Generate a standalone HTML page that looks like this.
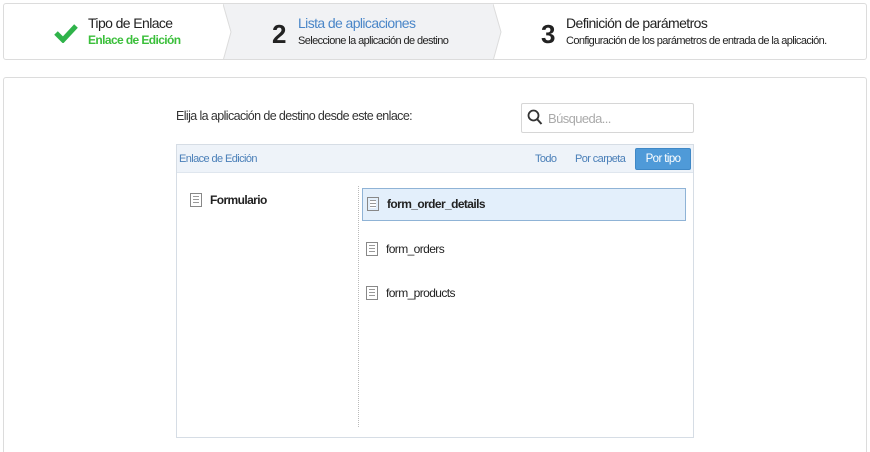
<!DOCTYPE html>
<html><head><meta charset="utf-8"><style>
*{margin:0;padding:0;box-sizing:border-box}
html,body{width:870px;height:452px;overflow:hidden}
body{background:#fff;font-family:"Liberation Sans",sans-serif;color:#222;position:relative;letter-spacing:-0.6px}
.abs{position:absolute}
.top{left:3px;top:3px;width:864px;height:57px;border:1px solid #dcdcdc;border-radius:3px;overflow:hidden}
.s2{left:219px;top:0;width:270px;height:57px;background:#f1f2f4}
.main{left:3px;top:77px;width:864px;height:375px;border:1px solid #dcdcdc;border-bottom:none;border-radius:3px 3px 0 0}
.t1{font-size:14px}
.sub{font-size:11px}
.num{font-size:26px;font-weight:bold;color:#222}
.box{left:176px;top:144px;width:518px;height:294px;border:1px solid #d6dde5}
.hdr{left:0;top:0;width:516px;height:28px;background:#eef3f9;border-bottom:1px solid #dfe6ee}
.item{font-size:12px;display:flex;align-items:center}
.ic{width:12px;height:14px;border:1px solid #888;margin-right:8px;background:repeating-linear-gradient(#fff 0 2px,#999 2px 3px);background-clip:content-box;padding:2px 2px}
</style></head><body>
<div class="abs top">
 <div class="abs s2"></div>
 <svg class="abs" style="left:219px;top:0" width="12" height="57"><polyline points="0,0 8,28 0,57" fill="#fff" stroke="#dcdcdc"/></svg>
 <svg class="abs" style="left:489px;top:0" width="12" height="57"><polygon points="0,0 8,28 0,57" fill="#f1f2f4"/><polyline points="0,0 8,28 0,57" fill="none" stroke="#dcdcdc"/></svg>
 <svg class="abs" style="left:50px;top:19px" width="24" height="20"><path d="M2 10 L9 17 L22 3" stroke="#2fb34a" stroke-width="5" fill="none"/></svg>
 <div class="abs t1" style="left:84px;top:11px">Tipo de Enlace</div>
 <div class="abs sub" style="left:84px;top:29px;color:#3bbf3b;font-weight:bold;font-size:12px">Enlace de Edición</div>
 <div class="abs num" style="left:268px;top:15px">2</div>
 <div class="abs t1" style="left:294px;top:11px;color:#4a86c8">Lista de aplicaciones</div>
 <div class="abs sub" style="left:294px;top:31px">Seleccione la aplicación de destino</div>
 <div class="abs num" style="left:537px;top:15px">3</div>
 <div class="abs t1" style="left:562px;top:11px">Definición de parámetros</div>
 <div class="abs sub" style="left:562px;top:31px">Configuración de los parámetros de entrada de la aplicación.</div>
</div>
<div class="abs main"></div>
<div class="abs" style="left:176px;top:109px;font-size:12.5px;color:#333">Elija la aplicación de destino desde este enlace:</div>
<div class="abs" style="left:521px;top:103px;width:173px;height:30px;border:1px solid #d6d6d6;border-radius:2px"></div>
<svg class="abs" style="left:527px;top:109px" width="16" height="17"><circle cx="6.5" cy="6.5" r="5" stroke="#333" stroke-width="1.8" fill="none"/><path d="M10 10 L14.5 15" stroke="#333" stroke-width="2"/></svg>
<div class="abs" style="left:548px;top:111px;font-size:13px;color:#aaa">Búsqueda...</div>
<div class="abs box">
 <div class="abs hdr"></div>
 <div class="abs" style="left:2px;top:8px;font-size:11px;color:#4a7fb8">Enlace de Edición</div>
 <div class="abs" style="left:358px;top:8px;font-size:11px;color:#4a7fb8">Todo</div>
 <div class="abs" style="left:398px;top:8px;font-size:11px;color:#4a7fb8">Por carpeta</div>
 <div class="abs" style="left:458px;top:3px;width:56px;height:22px;background:#4f9ad8;border:1px solid #3f88c6;border-radius:2px;color:#fff;font-size:11.5px;text-align:center;line-height:20px">Por tipo</div>
 <div class="abs" style="left:181px;top:41px;height:241px;border-left:1px dotted #bbb"></div>
 <div class="abs item" style="left:13px;top:48px;font-weight:bold"><span class="ic"></span>Formulario</div>
 <div class="abs" style="left:185px;top:43px;width:324px;height:33px;background:#e3effb;border:1px solid #8fb3d6"></div>
 <div class="abs item" style="left:190px;top:52px;font-weight:bold"><span class="ic"></span>form_order_details</div>
 <div class="abs item" style="left:189px;top:97px"><span class="ic"></span>form_orders</div>
 <div class="abs item" style="left:189px;top:141px"><span class="ic"></span>form_products</div>
</div>
</body></html>
